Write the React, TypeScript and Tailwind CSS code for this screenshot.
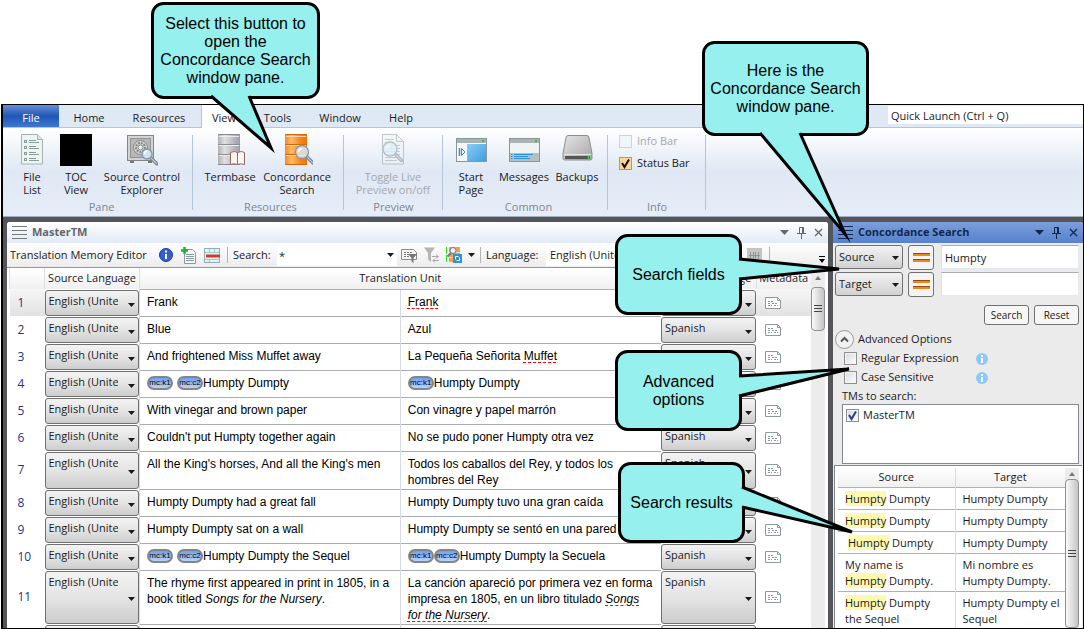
import { Fragment, useState } from 'react';
import type { ReactNode } from 'react';

type Tag = { tag: string; gap?: boolean };
type Part = string | Tag | { bad: string } | { em: string } | { badEm: string };

type Unit = {
  id: number;
  source: Part[];
  target: Part[];
  size: 'one' | 'two' | 'three';
};

const units: Unit[] = [
  { id: 1, source: ['Frank'], target: [{ bad: 'Frank' }], size: 'one' },
  { id: 2, source: ['Blue'], target: ['Azul'], size: 'one' },
  { id: 3, source: ['And frightened Miss Muffet away'], target: ['La Pequeña Señorita ', { bad: 'Muffet' }], size: 'one' },
  { id: 4, source: [{ tag: 'mc:k1', gap: true }, { tag: 'mc:c2' }, 'Humpty Dumpty'], target: [{ tag: 'mc:k1' }, 'Humpty Dumpty'], size: 'one' },
  { id: 5, source: ['With vinegar and brown paper'], target: ['Con vinagre y papel marrón'], size: 'one' },
  { id: 6, source: ["Couldn't put Humpty together again"], target: ['No se pudo poner Humpty otra vez'], size: 'one' },
  { id: 7, source: ["All the King's horses, And all the King's men"], target: ['Todos los caballos del Rey, y todos los hombres del Rey'], size: 'two' },
  { id: 8, source: ['Humpty Dumpty had a great fall'], target: ['Humpty Dumpty tuvo una gran caída'], size: 'one' },
  { id: 9, source: ['Humpty Dumpty sat on a wall'], target: ['Humpty Dumpty se sentó en una pared'], size: 'one' },
  { id: 10, source: [{ tag: 'mc:k1', gap: true }, { tag: 'mc:c2' }, 'Humpty Dumpty the Sequel'], target: [{ tag: 'mc:k1' }, { tag: 'mc:c2' }, 'Humpty Dumpty la Secuela'], size: 'one' },
  {
    id: 11,
    source: ['The rhyme first appeared in print in 1805, in a book titled ', { em: 'Songs for the Nursery' }, '.'],
    target: ['La canción apareció por primera vez en forma impresa en 1805, en un libro titulado ', { badEm: 'Songs for the Nursery' }, '.'],
    size: 'three',
  },
  { id: 12, source: [], target: [], size: 'one' },
];

const rowHeights = { one: 'h-[27px]', two: 'h-[38px]', three: 'h-[54px]' };
const selectSizes = { one: 'h-[26px] pb-[3px]', two: 'h-[37px] pb-[14px]', three: 'h-[53px] pb-[30px]' };

const results = [
  { lead: '', tail: 'Dumpty', target: 'Humpty Dumpty' },
  { lead: '', tail: 'Dumpty', target: 'Humpty Dumpty' },
  { lead: '', tail: 'Dumpty', target: 'Humpty Dumpty', indent: true },
  { lead: 'My name is ', tail: 'Dumpty.', target: 'Mi nombre es Humpty Dumpty.' },
  { lead: '', tail: 'Dumpty the Sequel', target: 'Humpty Dumpty el Sequel' },
];

const spell = 'underline decoration-dashed decoration-1 decoration-[#ff0000] underline-offset-2';

function Parts({ parts }: { parts: Part[] }) {
  return (
    <>
      {parts.map((p, i) => {
        if (typeof p === 'string') return <Fragment key={i}>{p}</Fragment>;
        if ('tag' in p) {
          return (
            <span
              key={i}
              className={`inline-flex h-[14px] w-[26px] items-center justify-center rounded-full border-2 border-[#858585] bg-linear-to-b from-[#6f9ff0] to-[#b9d2fb] align-middle text-[8px] leading-none ${p.gap ? 'mr-1' : ''}`}
            >
              {p.tag}
            </span>
          );
        }
        if ('bad' in p) return <span key={i} className={spell}>{p.bad}</span>;
        if ('badEm' in p) return <em key={i} className={spell}>{p.badEm}</em>;
        return <em key={i}>{p.em}</em>;
      })}
    </>
  );
}

function Caret({ className = '' }: { className?: string }) {
  return (
    <svg className={className} width="7" height="4" viewBox="0 0 7 4" aria-hidden="true">
      <path d="M0 0h7L3.5 4z" fill="currentColor" />
    </svg>
  );
}

function LanguageSelect({ label, value, size }: { label: string; value: string; size: Unit['size'] }) {
  return (
    <div className="relative">
      <select
        aria-label={label}
        className={`block w-full appearance-none overflow-hidden rounded-[3px] border border-[#707070] bg-linear-to-b from-[#f3f3f3] via-[#e4e4e4] to-[#cdcdcd] pr-5 pl-[3px] text-[11px] ${selectSizes[size]}`}
      >
        <option>{value}</option>
      </select>
      <Caret className="pointer-events-none absolute top-1/2 right-1" />
    </div>
  );
}

function MetaIcon() {
  return (
    <svg width="16" height="12" viewBox="0 0 16 12" fill="none" stroke="#8b9a9a" aria-hidden="true">
      <path d="M.5.5h12l3 3v8H.5z" fill="#fff" />
      <path d="M12.500 .5v3h3" />
      <path d="M3 4.500h5M3 6.500h3M7 6.500h6M3 8.500h4M9 8.500h4" strokeDasharray="2 1" />
    </svg>
  );
}

function Grip({ color }: { color: string }) {
  return (
    <svg width="15" height="13" viewBox="0 0 15 13" stroke={color} aria-hidden="true">
      <path d="M0 .5h15M0 4.500h15M0 8.500h15M0 12.500h15" />
    </svg>
  );
}

function PaneButtons() {
  return (
    <div className="flex items-center gap-2">
      <button type="button" aria-label="Pane menu">
        <svg width="9" height="5" viewBox="0 0 9 5"><path d="M0 0h9L4.500 5z" fill="currentColor" /></svg>
      </button>
      <button type="button" aria-label="Pin pane">
        <svg width="9" height="12" viewBox="0 0 9 12" fill="none" stroke="currentColor">
          <path d="M2.500 6V.5h4V6M5.500 1v5M0 6.500h9M4.500 7v5" />
        </svg>
      </button>
      <button type="button" aria-label="Close pane">
        <svg width="9" height="9" viewBox="0 0 9 9" fill="none" stroke="currentColor" strokeWidth="1.300">
          <path d="M1 1l7 7M8 1L1 8" />
        </svg>
      </button>
    </div>
  );
}

/* Ribbon icons */

function Lens({ x, y, r }: { x: number; y: number; r: number }) {
  const o = r * 0.75;
  return (
    <g>
      <path d={`M${x + o} ${y + o}L${x + o + 6} ${y + o + 6}`} stroke="#7c848c" strokeWidth="3.500" strokeLinecap="round" />
      <path d={`M${x + o} ${y + o}L${x + o + 6} ${y + o + 6}`} stroke="#c3c9d0" strokeWidth="1.200" />
      <circle cx={x} cy={y} r={r} fill="#d6ebf7" fillOpacity=".85" stroke="#8295a8" strokeWidth="1.300" />
      <path d={`M${x - r * 0.5} ${y}a${r * 0.5} ${r * 0.5} 0 0 1 ${r * 0.5} ${-r * 0.5}`} stroke="#fff" strokeWidth="1.300" fill="none" />
    </g>
  );
}

function FileListIcon() {
  return (
    <svg width="22" height="31" viewBox="0 0 22 31" fill="none">
      <path d="M.5.5h16l5 5v24.500H.5z" fill="#eef4f3" stroke="#a3b4b0" />
      <path d="M16.500.5v5h5" fill="#dce7e4" stroke="#a3b4b0" />
      {[6, 12, 18, 24].map((y) => (
        <g key={y} stroke="#8a9c97">
          <rect x="3.500" y={y + 0.5} width="2" height="2" />
          <path d={`M8 ${y + 0.5}h7M8 ${y + 2.500}h10`} />
        </g>
      ))}
    </svg>
  );
}

function SafeIcon() {
  return (
    <svg width="31" height="32" viewBox="0 0 31 32" fill="none">
      <path d="M3 27h4v2H3zM21 27h4v2h-4z" fill="#777" />
      <rect x=".5" y="1.500" width="26" height="25" fill="#d3d3d3" stroke="#858585" />
      <rect x="3.500" y="4.500" width="20" height="19" fill="#b7b7b7" stroke="#929292" />
      <circle cx="13.500" cy="13.500" r="7" fill="#d8d8d8" stroke="#858585" />
      <circle cx="13.500" cy="13.500" r="4.500" stroke="#888" strokeDasharray="2 1" strokeWidth="2" />
      <circle cx="13.500" cy="13.500" r="2.500" fill="#eee" stroke="#888" />
      <Lens x={20} y={20} r={5} />
    </svg>
  );
}

function CabinetIcon({ orange }: { orange?: boolean }) {
  const id = orange ? 'cabOrange' : 'cabGray';
  return (
    <svg width="32" height="32" viewBox="0 0 32 32" fill="none">
      <defs>
        <linearGradient id={id}>
          <stop offset="0" stopColor={orange ? '#f08a2a' : '#b0b0b0'} />
          <stop offset=".3" stopColor={orange ? '#ffb869' : '#e0e0e0'} />
          <stop offset=".7" stopColor={orange ? '#f7861a' : '#babac2'} />
          <stop offset="1" stopColor={orange ? '#ee7408' : '#9c9ca6'} />
        </linearGradient>
      </defs>
      <rect x="4" y="0" width="22" height="31" fill={`url(#${id})`} />
      <path d="M4 .5h22M4 10.500h22M4 20.500h22M4 30.500h22" stroke={orange ? '#d06a0c' : '#8b8b90'} />
      <path d="M5 2.500h20M5 11.500h20M5 21.500h20" stroke={orange ? '#ffd9a8' : '#ededed'} />
      {orange ? (
        <Lens x={21} y={18} r={6.500} />
      ) : (
        <g>
          <path d="M16.500 18.500q4-2 7 0 4-2 7 0v12q-4-1.500-7 0-4-1.500-7 0z" fill="#fbf6f3" stroke="#9d6560" />
          <path d="M23.500 18.500v12" stroke="#9d6560" />
        </g>
      )}
    </svg>
  );
}

function PreviewIcon() {
  return (
    <svg width="24" height="31" viewBox="0 0 24 31" fill="none" opacity=".55">
      <path d="M1.500.5h14l7 7v22.500h-21z" fill="#eff3f5" stroke="#8fa0a5" />
      <path d="M15.500.5v7h7" stroke="#8fa0a5" />
      <path d="M4 5.500h9M4 8.500h9M4 11.500h15M4 14.500h15M4 17.500h15M4 20.500h15M4 23.500h15M4 26.500h12" stroke="#9fb0b4" />
      <Lens x={9} y={15} r={7} />
    </svg>
  );
}

function StartPageIcon() {
  return (
    <svg width="31" height="32" viewBox="0 0 31 32" fill="none">
      <defs>
        <linearGradient id="startBlue" x1="0" y1="0" x2="1" y2="1">
          <stop offset="0" stopColor="#8accf4" />
          <stop offset="1" stopColor="#3d9fe2" />
        </linearGradient>
      </defs>
      <rect x=".5" y="4.500" width="30" height="23" fill="#f4f8f9" stroke="#8b9696" />
      <rect x="1" y="5" width="29" height="4" fill="#a9b3b3" />
      <rect x="26" y="6" width="2" height="2" fill="#3fbf2f" />
      <rect x="11" y="10" width="19" height="17" fill="url(#startBlue)" />
      <path d="M3.500 14v8" stroke="#3a8fce" strokeWidth="1.500" />
      <path d="M5.500 14.500v7l3.500-3.500z" stroke="#3a8fce" />
    </svg>
  );
}

function MessagesIcon() {
  return (
    <svg width="31" height="32" viewBox="0 0 31 32" fill="none">
      <rect x=".5" y="4.500" width="30" height="23" fill="#eef4f2" stroke="#8b9696" />
      <rect x="1" y="5" width="29" height="4" fill="#a9b3b3" />
      <rect x="26" y="6" width="2" height="2" fill="#3fbf2f" />
      <rect x="1" y="19" width="29" height="8" fill="#b3c1c1" />
      <path d="M2 20.500h1.500M2 22.500h1.500M2 24.500h1.500M5 20.500h19M5 22.500h14M5 24.500h16" stroke="#2f93d8" />
    </svg>
  );
}

function BackupsIcon() {
  return (
    <svg width="31" height="32" viewBox="0 0 31 32" fill="none">
      <defs>
        <linearGradient id="drive" x1="0" y1="0" x2="1" y2="1">
          <stop offset="0" stopColor="#e6e6e6" />
          <stop offset="1" stopColor="#a5a5a5" />
        </linearGradient>
      </defs>
      <path d="M6 1.500h19q1.500 0 2 2l3 16v5q0 1.500-2 1.500H3q-2 0-2-1.500v-5l3-16q.5-2 2-2z" fill="url(#drive)" stroke="#8e8e8e" />
      <path d="M2 20.500h27" stroke="#e8e8e8" />
      <path d="M3 23.500h25" stroke="#555" strokeWidth="3" />
      <path d="M26.500 22v3" stroke="#35e035" strokeWidth="1.500" />
    </svg>
  );
}

function RibbonButton({ icon, label, className, disabled }: { icon: ReactNode; label: string; className: string; disabled?: boolean }) {
  return (
    <button type="button" disabled={disabled} className={`flex flex-col items-center gap-1 disabled:text-[#a5a8ad] ${className}`}>
      <span className="flex h-8 items-start justify-center">{icon}</span>
      <span className="text-center leading-[13px] whitespace-pre-line">{label}</span>
    </button>
  );
}

function RibbonGroup({ title, className, children }: { title: string; className: string; children: ReactNode }) {
  return (
    <section aria-label={title} className={`relative flex shrink-0 flex-col justify-between pt-[6px] pb-[3px] text-[11px] ${className}`}>
      <div className="flex">{children}</div>
      <div className="text-center leading-[13px] text-[#80868e]">{title}</div>
      <span className="absolute top-[7px] right-0 h-[75px] w-px bg-[#b4c5d8]" />
    </section>
  );
}

function Ribbon() {
  const tab = 'flex items-center justify-center pt-1 text-[11px]';
  return (
    <header className="shrink-0">
      <nav className="flex h-[23px] border-b border-[#b3c6dc] bg-[#dfe9f5]">
        <button type="button" className={`${tab} w-[56px] bg-linear-to-b from-[#6690d6] via-[#1f56b5] to-[#3f78d0] text-white`}>File</button>
        <button type="button" className={`${tab} w-[60px]`}>Home</button>
        <button type="button" className={`${tab} w-[80px]`}>Resources</button>
        <button type="button" className={`${tab} -mb-px ml-[2px] w-[45px] border-l border-[#b3c6dc] bg-white`}>View</button>
        <button type="button" className={`${tab} w-[63px]`}>Tools</button>
        <button type="button" className={`${tab} w-[62px]`}>Window</button>
        <button type="button" className={`${tab} w-[60px]`}>Help</button>
        <input
          aria-label="Quick Launch"
          placeholder="Quick Launch (Ctrl + Q)"
          className="mt-px ml-auto h-[18px] w-[195px] bg-white px-[3px] text-[11px] outline-none placeholder:text-[#222]"
        />
      </nav>
      <div className="flex h-[89px] border-b border-[#9fb0c4] bg-linear-to-b from-white via-[#dfe8f4] to-[#e6edf8]">
        <RibbonGroup title="Pane" className="w-[190px] pl-[7px]">
          <RibbonButton className="w-11" icon={<FileListIcon />} label={'File\nList'} />
          <RibbonButton className="w-11" icon={<span className="h-8 w-8 bg-black" />} label={'TOC\nView'} />
          <RibbonButton className="w-[88px]" icon={<SafeIcon />} label={'Source Control\nExplorer'} />
        </RibbonGroup>
        <RibbonGroup title="Resources" className="w-[151px] pl-1">
          <RibbonButton className="w-[66px]" icon={<CabinetIcon />} label="Termbase" />
          <RibbonButton className="w-[68px]" icon={<CabinetIcon orange />} label={'Concordance\nSearch'} />
        </RibbonGroup>
        <RibbonGroup title="Preview" className="w-[99px] px-[5px]">
          <RibbonButton className="w-[88px]" disabled icon={<PreviewIcon />} label={'Toggle Live\nPreview on/off'} />
        </RibbonGroup>
        <RibbonGroup title="Common" className="w-[165px] pl-[6px]">
          <RibbonButton className="w-11" icon={<StartPageIcon />} label={'Start\nPage'} />
          <RibbonButton className="w-[62px]" icon={<MessagesIcon />} label="Messages" />
          <RibbonButton className="w-11" icon={<BackupsIcon />} label="Backups" />
        </RibbonGroup>
        <RibbonGroup title="Info" className="w-[98px] px-[11px]">
          <div className="flex flex-col gap-2">
            <label className="flex items-center gap-[5px] leading-[14px] whitespace-nowrap text-[#a5a8ad]">
              <input type="checkbox" disabled className="h-[13px] w-[13px] appearance-none border border-[#c9d3e6] bg-[#f0f4fb]" />
              Info Bar
            </label>
            <Check box="border-[#c79a3a] bg-[#fcd79a]" mark="#111" defaultChecked label="Status Bar" className="gap-[5px] leading-[14px] whitespace-nowrap" />
          </div>
        </RibbonGroup>
      </div>
    </header>
  );
}

function Check({ label, box, mark, className = '', defaultChecked = false }: { label: string; box: string; mark: string; className?: string; defaultChecked?: boolean }) {
  const [on, setOn] = useState(defaultChecked);
  return (
    <label className={`flex items-center ${className}`}>
      <span className="relative">
        <input
          type="checkbox"
          checked={on}
          onChange={(e) => setOn(e.target.checked)}
          className={`block h-[13px] w-[13px] appearance-none border ${box}`}
        />
        {on && (
          <svg className="pointer-events-none absolute top-0 left-0" width="13" height="13" viewBox="0 0 13 13" fill="none" stroke={mark} strokeWidth="2">
            <path d="M3 6l2.500 4L10 2.500" />
          </svg>
        )}
      </span>
      {label}
    </label>
  );
}

/* Translation memory editor */

function EditorToolbar() {
  return (
    <div className="flex h-[25px] items-center border-b border-[#8f97a3] bg-linear-to-b from-white to-[#ececec] pl-[3px] text-[11px] whitespace-nowrap">
      <span className="w-[149px]">Translation Memory Editor</span>
      <button type="button" aria-label="About this editor" className="mr-2">
        <svg width="14" height="14" viewBox="0 0 14 14">
          <circle cx="7" cy="7" r="6.500" fill="#2f5fd0" stroke="#1d3f9c" />
          <path d="M7 2.500v2M7 6v5" stroke="#fff" strokeWidth="2" />
        </svg>
      </button>
      <button type="button" aria-label="Add translation unit" className="mr-2">
        <svg width="15" height="17" viewBox="0 0 15 17" fill="none">
          <path d="M3.500 2.500h8l3 3v11h-11z" fill="#f3f6f6" stroke="#8b9a9a" />
          <path d="M5 7.500h8M5 9.500h8M5 11.500h8M5 13.500h8" stroke="#8b9a9a" />
          <path d="M3.500 0v7M0 3.500h7" stroke="#23b02b" strokeWidth="2.500" />
        </svg>
      </button>
      <button type="button" aria-label="Delete translation unit" className="mr-[7px]">
        <svg width="16" height="15" viewBox="0 0 16 15" fill="none">
          <rect x=".5" y=".5" width="15" height="14" fill="#e4f2f7" stroke="#8fb0b4" />
          <path d="M1 4.500h14M1 11.500h14M5.500 1v4M10.500 1v4M5.500 11v3" stroke="#9fcbd3" />
          <path d="M2 8h14" stroke="#d63a2a" strokeWidth="3" />
        </svg>
      </button>
      <span className="mr-[5px] h-4 w-px bg-[#b5b5b5]" />
      <label htmlFor="tm-search" className="w-[44px]">Search:</label>
      <input id="tm-search" defaultValue="*" className="h-[22px] w-[106px] bg-white pl-[2px] outline-none" />
      <button type="button" aria-label="Recent searches" className="flex h-[22px] w-[14px] items-center justify-center bg-white">
        <Caret />
      </button>
      <button type="button" aria-label="Filter by metadata" className="mr-[6px] ml-1">
        <svg width="17" height="15" viewBox="0 0 17 15" fill="none">
          <path d="M.5 1.500h12l3 3v7H.5z" fill="#f5f5f5" stroke="#8a8a8a" />
          <path d="M3 4.500h8M3 6.500h6M3 8.500h5" stroke="#777" strokeDasharray="2 1" />
          <path d="M7 6h9l-3.500 4v5l-2-1.500V10z" fill="#777" />
        </svg>
      </button>
      <button type="button" aria-label="Clear filter" disabled className="mr-[6px]">
        <svg width="16" height="16" viewBox="0 0 16 16" fill="none">
          <path d="M0 .5h11L7 6v9l-3-2.500V6z" fill="#b5b5b5" />
          <path d="M8 9.500h6M12 7.500l2.500 2-2.500 2M15 13.500H9M11 11.500l-2 2 2 2" stroke="#aaa" />
        </svg>
      </button>
      <button type="button" aria-label="Update memory" className="mr-[6px]">
        <svg width="16" height="16" viewBox="0 0 16 16" fill="none">
          <rect x="3" y="0" width="11" height="15" fill="#f7a04c" />
          <path d="M3 5.500h11M3 10.500h11" stroke="#ffd9a8" />
          <path d="M.5 0v16" stroke="#22e622" strokeDasharray="7 1" />
          <circle cx="7" cy="3.500" r="3" fill="#eef" stroke="#777" />
          <path d="M5 6L1.500 9.500" stroke="#777" strokeWidth="2" />
          <rect x="7" y="7" width="9" height="9" fill="#2f93d8" />
          <path d="M9.500 12.500v-3h3M13.500 10.500v3h-3" stroke="#fff" />
        </svg>
      </button>
      <Caret className="mr-[3px]" />
      <span className="mr-[5px] ml-[2px] h-4 w-px bg-[#b5b5b5]" />
      <label htmlFor="tm-language" className="w-[60px]">Language:</label>
      <select id="tm-language" className="h-[22px] w-[190px] appearance-none bg-white pl-1 outline-none">
        <option>English (United States)</option>
      </select>
      <button type="button" aria-label="Show metadata" disabled className="ml-[11px] flex h-[15px] w-[15px] items-center justify-center bg-[#c4c4c4]">
        <svg width="11" height="9" viewBox="0 0 11 9" stroke="#929292"><path d="M1.500 1v7M4.500 1v7M6.500 1v7M9.500 1v7M0 4.500h11" /></svg>
      </button>
      <span className="ml-[7px] h-4 w-px bg-[#b5b5b5]" />
      <button type="button" aria-label="More toolbar options" className="mr-[3px] ml-auto self-end pb-1">
        <svg width="6" height="7" viewBox="0 0 6 7"><path d="M0 0h6v1H0zM0 3h6L3 7z" /></svg>
      </button>
    </div>
  );
}

function UnitTable() {
  const head = 'border-l border-[#dadde2] bg-linear-to-b from-white to-[#f0f0f0] p-0 text-center font-normal';
  return (
    <table className="w-full table-fixed border-collapse text-[11px]">
      <colgroup>
        <col className="w-[35px]" />
        <col className="w-[95px]" />
        <col />
        <col />
        <col className="w-[95px]" />
        <col className="w-[55px]" />
      </colgroup>
      <thead>
        <tr className="h-[21px] whitespace-nowrap">
          <th className={head} aria-label="Number" />
          <th className={head}>Source Language</th>
          <th className={head} colSpan={2}>Translation Unit</th>
          <th className={head}>Target Language</th>
          <th className={head}>Metadata</th>
        </tr>
      </thead>
      <tbody>
        {units.map((u) => {
          const cell = 'border-t border-l border-[#a9adb3] border-l-[#d5dae3] px-[7px] pt-1 pb-0 align-top font-["Liberation_Sans",sans-serif] text-[12px] leading-4 text-black';
          const side = u.id === 1 ? 'bg-linear-to-b from-[#f6f6f6] to-[#e2e2e2]' : '';
          return (
            <tr key={u.id} className={rowHeights[u.size]}>
              <td className={`p-0 pl-2 text-[12px] text-[#23358c] ${side}`}>{u.source.length > 0 && u.id}</td>
              <td className="p-0">
                <LanguageSelect label={`Source language of unit ${u.id}`} value="English (United States)" size={u.size} />
              </td>
              <td className={cell}><Parts parts={u.source} /></td>
              <td className={cell}><Parts parts={u.target} /></td>
              <td className="p-0">
                <LanguageSelect label={`Target language of unit ${u.id}`} value="Spanish" size={u.size} />
              </td>
              <td className={`p-0 pl-[9px] ${side}`}>
                <button type="button" aria-label={`Metadata of unit ${u.id}`} className="block"><MetaIcon /></button>
              </td>
            </tr>
          );
        })}
      </tbody>
    </table>
  );
}

function ScrollBar({ className, thumb }: { className: string; thumb: string }) {
  return (
    <div className={`flex shrink-0 flex-col items-center bg-[#ececec] ${className}`} aria-hidden="true">
      <span className="flex h-[19px] items-center">
        <svg width="6" height="4" viewBox="0 0 6 4"><path d="M0 4h6L3 0z" fill="#777" /></svg>
      </span>
      <span className={`flex w-full items-center justify-center rounded-sm border border-[#909090] bg-linear-to-r from-[#fafafa] to-[#c4c4c4] ${thumb}`}>
        <svg width="8" height="8" viewBox="0 0 8 8" stroke="#444"><path d="M0 .5h8M0 3.500h8M0 6.500h8" /></svg>
      </span>
    </div>
  );
}

function EditorPane() {
  return (
    <main className="flex min-w-0 flex-1 flex-col overflow-hidden rounded-t-[3px] bg-white">
      <div className="flex h-[21px] shrink-0 items-center justify-between bg-linear-to-b from-white to-[#e1eaf6] pr-[5px] pl-[5px] text-[#666]">
        <h1 className="flex items-center gap-[5px] text-[11px] font-bold"><Grip color="#777" />MasterTM</h1>
        <PaneButtons />
      </div>
      <div className="shrink-0"><EditorToolbar /></div>
      <div className="flex min-h-0 flex-1 pr-[3px] pl-[2px]">
        <div className="min-w-0 flex-1 overflow-hidden"><UnitTable /></div>
        <ScrollBar className="w-[14px]" thumb="h-[44px]" />
      </div>
    </main>
  );
}

/* Concordance search */

function SearchField({ name, value }: { name: string; value: string }) {
  return (
    <div className="flex h-6 items-center">
      <div className="relative w-[68px]">
        <select aria-label={`${name} scope`} className="block h-6 w-full appearance-none rounded-[3px] border border-[#707070] bg-linear-to-b from-[#f3f3f3] to-[#d2d2d2] pl-[3px] text-[11px]">
          <option>{name}</option>
        </select>
        <Caret className="pointer-events-none absolute top-[11px] right-1" />
      </div>
      <button type="button" aria-label={`${name} exact match`} className="ml-[5px] flex h-[25px] w-[26px] flex-col items-center justify-center gap-[3px] rounded-[3px] border border-[#707070] bg-[#f4f4f4]">
        <span className="h-[3px] w-[17px] border-t border-[#9c4a0c] bg-[#f0861a]" />
        <span className="h-[3px] w-[17px] border-t border-[#9c4a0c] bg-[#f0861a]" />
      </button>
      <input aria-label={`${name} text`} defaultValue={value} className="ml-[7px] h-6 min-w-0 flex-1 border border-t-[#abadb3] border-r-[#e3e9ef] border-b-[#e3e9ef] border-l-[#dbdfe6] bg-white px-[3px] text-[11px] outline-none" />
    </div>
  );
}

function InfoDot() {
  return (
    <svg width="12" height="12" viewBox="0 0 12 12" aria-hidden="true">
      <circle cx="6" cy="6" r="6" fill="#8cc8fa" />
      <path d="M6 2v2M6 5v5" stroke="#fff" strokeWidth="2" />
    </svg>
  );
}

function ConcordancePane() {
  const action = 'h-5 w-[45px] rounded-[3px] border border-[#707070] bg-[#f6f6f6] text-[10px]';
  const box = 'border-[#8e8f8f] bg-linear-to-br from-[#d4d8de] to-white shadow-[inset_0_0_0_1px_#f4f4f4]';
  return (
    <aside className="flex w-[250px] shrink-0 flex-col overflow-hidden rounded-t-[3px] bg-[#ebebeb] text-[11px]">
      <div className="flex h-[21px] shrink-0 items-center justify-between bg-linear-to-b from-[#7d9edb] to-[#5681cc] pr-[5px] pl-[5px] text-[#10284f]">
        <h2 className="flex items-center gap-[5px] font-bold whitespace-nowrap"><Grip color="#10284f" />Concordance Search</h2>
        <PaneButtons />
      </div>
      <div className="flex shrink-0 flex-col gap-[3px] pt-[2px] pr-1 pl-[2px]">
        <SearchField name="Source" value="Humpty" />
        <SearchField name="Target" value="" />
      </div>
      <div className="mt-[9px] flex shrink-0 justify-end gap-[5px] pr-1">
        <button type="button" className={action}>Search</button>
        <button type="button" className={action}>Reset</button>
      </div>
      <button type="button" aria-expanded="true" className="mt-1 flex h-5 shrink-0 items-center gap-1 pl-[2px]">
        <svg width="19" height="19" viewBox="0 0 19 19" fill="none">
          <circle cx="9.500" cy="9.500" r="9" fill="#f2f2f2" stroke="#9a9a9a" />
          <path d="M6 11.500L9.500 8l3.500 3.500" stroke="#555" strokeWidth="2" />
        </svg>
        Advanced Options
      </button>
      <div className="flex h-[19px] shrink-0 items-center pl-[11px]">
        <Check label="Regular Expression" box={box} mark="#2a3b8f" className="w-[132px] gap-1 whitespace-nowrap" />
        <InfoDot />
      </div>
      <div className="flex h-[19px] shrink-0 items-center pl-[11px]">
        <Check label="Case Sensitive" box={box} mark="#2a3b8f" className="w-[132px] gap-1 whitespace-nowrap" />
        <InfoDot />
      </div>
      <div className="shrink-0 pt-px pl-[9px] leading-4">TMs to search:</div>
      <div className="mr-1 ml-[9px] h-[60px] shrink-0 border border-[#828790] bg-white pt-[3px] pl-[3px]">
        <Check label="MasterTM" box={box} mark="#2a3b8f" className="gap-1 leading-[14px]" defaultChecked />
      </div>
      <div className="mt-px mr-px ml-px flex min-h-0 flex-1 border-t border-l border-[#828790] bg-white pt-[2px] pr-[3px] pl-[3px]">
        <div className="min-w-0 flex-1 overflow-hidden">
          <table className="w-full table-fixed border-collapse text-[11px]">
            <thead>
              <tr className="h-[19px] bg-linear-to-b from-white to-[#f0f0f0]">
                <th className="w-[117px] p-0 font-normal">Source</th>
                <th className="border-l border-[#d5dae3] p-0 font-normal">Target</th>
              </tr>
            </thead>
            <tbody>
              {results.map((r, i) => (
                <tr key={i} className="border-t border-[#a9b2bd]">
                  <td className={`pt-[3px] pr-2 pb-[2px] align-top leading-4 ${r.indent ? 'pl-[10px]' : 'pl-[7px]'}`}>
                    {r.lead}<mark className="bg-[#fdf9b0] text-inherit">Humpty</mark> {r.tail}
                  </td>
                  <td className="border-l border-[#d5dae3] pt-[3px] pr-0 pb-[2px] pl-[7px] align-top leading-4">{r.target}</td>
                </tr>
              ))}
            </tbody>
          </table>
        </div>
        <ScrollBar className="w-[14px]" thumb="h-[254px]" />
      </div>
    </aside>
  );
}

/* Speech bubbles laid over the window */

function Callout({ className, w, h, tail, children }: { className: string; w: number; h: number; tail: string; children: ReactNode }) {
  return (
    <div className={`absolute flex items-center justify-center text-center font-["Liberation_Sans",sans-serif] text-[16px] leading-[18px] whitespace-pre-line text-black ${className}`}>
      <svg className="absolute top-0 left-0 overflow-visible" width={w} height={h} aria-hidden="true">
        <rect x="1.500" y="1.500" width={w - 3} height={h - 3} rx="11" fill="#96f0ee" stroke="#000" strokeWidth="3" />
        <path d={tail} fill="#96f0ee" stroke="#000" strokeWidth="3" strokeMiterlimit="10" />
      </svg>
      <p className="relative">{children}</p>
    </div>
  );
}

export default function App() {
  return (
    <div className='relative flex h-screen flex-col overflow-hidden bg-white pt-[104px] pl-px font-["Open_Sans","Noto_Sans",sans-serif] text-[#1a1a1a]'>
      <div className="flex min-h-0 flex-1 flex-col border border-l-2 border-black">
        <Ribbon />
        <div className="flex min-h-0 flex-1 gap-[5px] bg-[#55565a] pt-[5px] pl-1">
          <EditorPane />
          <ConcordancePane />
        </div>
      </div>

      <Callout className="top-[2px] left-[151px] h-[97px] w-[169px]" w={169} h={97} tail="M60 94L120 146L98 94">
        {'Select this button to\nopen the\nConcordance Search\nwindow pane.'}
      </Callout>
      <Callout className="top-[41px] right-[215px] h-[95px] w-[167px]" w={167} h={95} tail="M58 92L143 193L98 92">
        {'Here is the\nConcordance Search\nwindow pane.'}
      </Callout>
      <Callout className="top-[234px] right-[342px] h-[81px] w-[127px]" w={127} h={81} tail="M124 25L224 35L124 45">Search fields</Callout>
      <Callout className="top-[350px] right-[342px] h-[81px] w-[127px]" w={127} h={81} tail="M124 26L234 19L124 46">
        {'Advanced\noptions'}
      </Callout>
      <Callout className="top-[462px] right-[339px] h-[81px] w-[127px]" w={127} h={81} tail="M124 25L234 70L124 45">Search results</Callout>
    </div>
  );
}
